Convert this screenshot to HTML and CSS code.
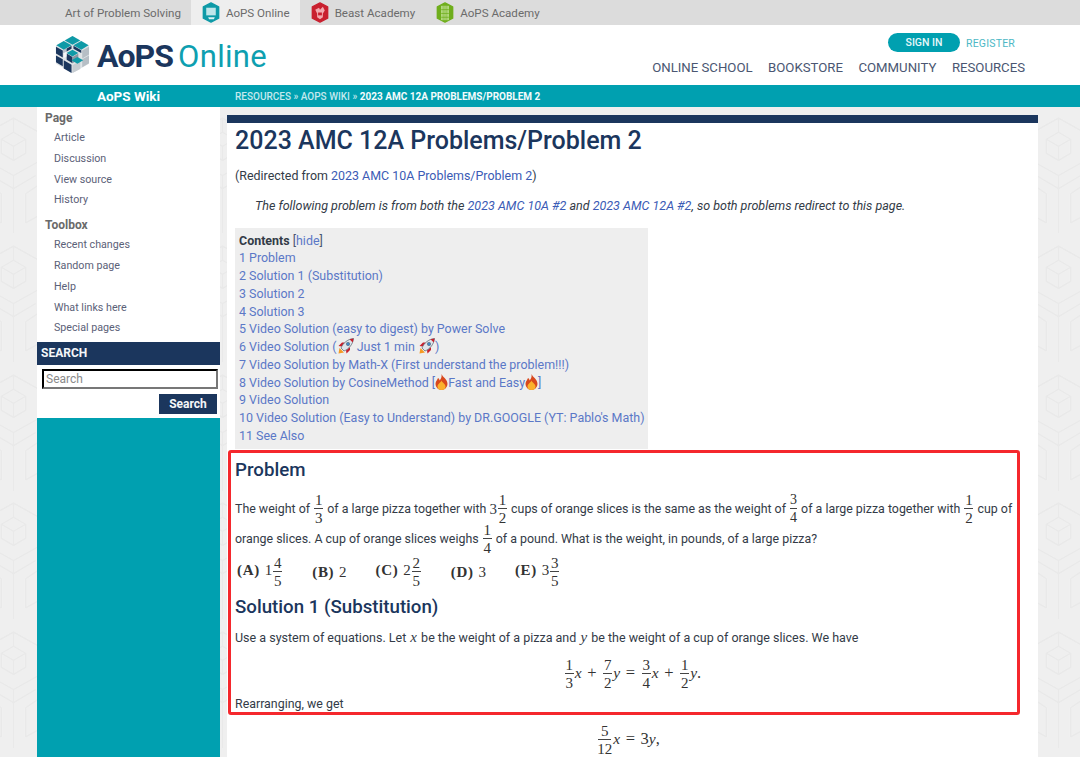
FILE: index.html
```html
<!DOCTYPE html>
<html lang="en">
<head>
<meta charset="utf-8">
<title>2023 AMC 12A Problems/Problem 2 - AoPS Wiki</title>
<link rel="stylesheet" href="styles.css">
</head>
<body>
<svg class="defs" width="0" height="0" aria-hidden="true">
  <defs>
    <symbol id="rocket" viewBox="0 0 16 16">
      <path d="M.500 15.500l1-5.500 4.500 4.500z" fill="#f59a23"/>
      <path d="M3.500 8.500L.500 8 4 4.500h3zM8 12.500l.5 3L12 12V9z" fill="#c8202c"/>
      <path d="M3 10C5 5 10 1 15.500.5 15 6 11 11 6 13z" fill="#dfe5ea" stroke="#4f5d6a" stroke-width=".7"/>
      <path d="M11.500 1.200L15.500.5 14.800 4.500z" fill="#c8202c"/>
      <circle cx="10" cy="6" r="1.700" fill="#3f88c5" stroke="#4f5d6a" stroke-width=".5"/>
    </symbol>
    <symbol id="flame" viewBox="0 0 13 16">
      <path d="M6.500 0c1 3 6 5 6 10a6 6 0 0 1-12 0c0-3 2-4 2.500-6 1 .5 1.500 1.500 1.500 2.500C6 5 7 3 6.500 0z" fill="#d9481c"/>
      <path d="M6.500 6.500c.5 2 4 3.200 4 6a4 3.500 0 0 1-8 0c0-2.800 3.500-4 4-6z" fill="#fbb02c"/>
    </symbol>
  </defs>
</svg>

<nav class="topbar">
  <a class="site">Art of Problem Solving</a>
  <a class="site active">
    <svg class="site-icon" viewBox="0 0 18 22"><path d="M9 1l8 4v12l-8 4-8-4V5z" fill="#0e9aa7" stroke="#0e9aa7" stroke-width="1.500" stroke-linejoin="round"/><path d="M4 6h10v8H4z" fill="#bfe6ea"/><path d="M6 16h7l-1 2H7z" fill="#dff3f5"/></svg>
    AoPS Online
  </a>
  <a class="site">
    <svg class="site-icon" viewBox="0 0 18 22"><path d="M9 1l8 4v12l-8 4-8-4V5z" fill="#c9202f" stroke="#c9202f" stroke-width="1.500" stroke-linejoin="round"/><path d="M4 8l4-2 1 2 3-3 2 4-2 3v4l-3 2-3-2v-4z" fill="#f2a9af"/><path d="M7 11h4v3H7z" fill="#c9202f"/></svg>
    Beast Academy
  </a>
  <a class="site">
    <svg class="site-icon" viewBox="0 0 18 22"><path d="M9 1l8 4v12l-8 4-8-4V5z" fill="#6fae1c" stroke="#6fae1c" stroke-width="1.500" stroke-linejoin="round"/><path d="M5 4h8v15H5z" fill="#c5e299"/><path d="M7 4v15M9 4v15M11 4v15M5 8h8M5 12h8M5 16h8" stroke="#6fae1c" stroke-width=".8"/></svg>
    AoPS Academy
  </a>
</nav>

<header class="masthead">
  <a class="logo">
    <svg class="logo-mark" viewBox="0 0 36 40">
      <path d="M18 1l17 9.500v19L18 39 1 29.500v-19z" fill="#dfe3e6"/>
      <path d="M18 1l8 4.500-8 4.500-8-4.500z" fill="#0e9aa7"/>
      <path d="M9 6l8 4.500-8 4.500-7.500-4.500zM27 6l7.500 4.500L27 15l-8-4.500z" fill="#0e9aa7"/>
      <path d="M1 12l7 4v7l-7-4zM1 21l7 4v7l-7-4zM9 26l8 4.500V39l-8-4.500z" fill="#1b365d"/>
      <path d="M18 31l8-4.500V35l-8 4z" fill="#c6ccd1"/>
      <path d="M28 16l7-4v8l-7 4zM28 25l7-4v8l-7 4z" fill="#b6bec5"/>
      <path d="M19 11l8 4.500v3L24 17l-5-3zM17 11l-8 4.500v3L12 17l5-3z" fill="#1b365d"/>
      <path d="M18 15l6 3.500-6 3.500-6-3.500z" fill="#0e9aa7"/>
      <path d="M12 19l6 3.500V29l-6-3.500z" fill="#1b365d"/>
      <path d="M18 22.500l6-3.500v6.500L18 29z" fill="#8a97a3"/>
      <path d="M17 26l6-3.500 6 3.500-6 3.500z" fill="#0e9aa7"/>
      <path d="M9 15.500l3-1.800v8L9 23.500z" fill="#fff" opacity=".7"/>
    </svg>
    <span class="logo-aops">AoPS</span><span class="logo-online">Online</span>
  </a>
  <div class="head-right">
    <div class="account">
      <a class="signin">SIGN IN</a>
      <a class="register">REGISTER</a>
    </div>
    <div class="mainnav">
      <a>ONLINE SCHOOL</a>
      <a>BOOKSTORE</a>
      <a>COMMUNITY</a>
      <a>RESOURCES</a>
    </div>
  </div>
</header>

<div class="subbar">
  <div class="wiki-title">AoPS Wiki</div>
  <div class="crumbs"><span>RESOURCES » AOPS WIKI » </span><b>2023 AMC 12A PROBLEMS/PROBLEM 2</b></div>
</div>

<div class="layout">
  <aside class="sidebar">
    <div class="menu">
      <h4>Page</h4>
      <a>Article</a>
      <a>Discussion</a>
      <a>View source</a>
      <a>History</a>
      <h4 class="second">Toolbox</h4>
      <a>Recent changes</a>
      <a>Random page</a>
      <a>Help</a>
      <a>What links here</a>
      <a>Special pages</a>
    </div>
    <div class="search-title">SEARCH</div>
    <div class="search">
      <input class="search-input" type="text" placeholder="Search">
      <button class="search-btn" type="button">Search</button>
    </div>
    <div class="side-fill"></div>
  </aside>

  <main class="content">
    <div class="band"></div>
    <div class="article">
      <h1>2023 AMC 12A Problems/Problem 2</h1>
      <p class="redirect">(Redirected from <a class="lnk">2023 AMC 10A Problems/Problem 2</a>)</p>
      <p class="note">The following problem is from both the <a class="lnk">2023 AMC 10A #2</a> and <a class="lnk">2023 AMC 12A #2</a>, so both problems redirect to this page.</p>
      <div class="toc">
        <div><b>Contents</b> [<a class="toc-link">hide</a>]</div>
        <a>1 Problem</a>
        <a>2 Solution 1 (Substitution)</a>
        <a>3 Solution 2</a>
        <a>4 Solution 3</a>
        <a>5 Video Solution (easy to digest) by Power Solve</a>
        <a>6 Video Solution (<svg class="emoji"><use href="#rocket"/></svg> Just 1 min <svg class="emoji"><use href="#rocket"/></svg>)</a>
        <a>7 Video Solution by Math-X (First understand the problem!!!)</a>
        <a>8 Video Solution by CosineMethod [<svg class="emoji flame"><use href="#flame"/></svg>Fast and Easy<svg class="emoji flame"><use href="#flame"/></svg>]</a>
        <a>9 Video Solution</a>
        <a>10 Video Solution (Easy to Understand) by DR.GOOGLE (YT: Pablo's Math)</a>
        <a>11 See Also</a>
      </div>

      <h2 class="h-problem">Problem</h2>
      <p class="text line1">The weight of <span class="frac"><i>1</i><i>3</i></span> of a large pizza together with <span class="m">3</span><span class="frac"><i>1</i><i>2</i></span> cups of orange slices is the same as the weight of <span class="frac small"><i>3</i><i>4</i></span> of a large pizza together with <span class="frac"><i>1</i><i>2</i></span> cup of</p>
      <p class="text line2">orange slices. A cup of orange slices weighs <span class="frac"><i>1</i><i>4</i></span> of a pound. What is the weight, in pounds, of a large pizza?</p>
      <div class="choices">
        <span class="choice"><b>(A)</b> 1<span class="frac"><i>4</i><i>5</i></span></span>
        <span class="choice"><b>(B)</b> 2</span>
        <span class="choice"><b>(C)</b> 2<span class="frac"><i>2</i><i>5</i></span></span>
        <span class="choice"><b>(D)</b> 3</span>
        <span class="choice"><b>(E)</b> 3<span class="frac"><i>3</i><i>5</i></span></span>
      </div>

      <h2 class="h-solution">Solution 1 (Substitution)</h2>
      <p class="text sol">Use a system of equations. Let <em class="mv">x</em> be the weight of a pizza and <em class="mv">y</em> be the weight of a cup of orange slices. We have</p>
      <div class="eq eq1"><span class="frac"><i>1</i><i>3</i></span><em class="mv">x</em> + <span class="frac"><i>7</i><i>2</i></span><em class="mv">y</em> = <span class="frac"><i>3</i><i>4</i></span><em class="mv">x</em> + <span class="frac"><i>1</i><i>2</i></span><em class="mv">y</em>.</div>
      <p class="text rearr">Rearranging, we get</p>
      <div class="eq eq2"><span class="frac wide"><i>5</i><i>12</i></span><em class="mv">x</em> = 3<em class="mv">y</em>,</div>
    </div>
  </main>
</div>
<div class="highlight"></div>
</body>
</html>
```
FILE: styles.css
```css
* { box-sizing: border-box; }
html, body { margin: 0; height: 757px; overflow: hidden; }
body {
  font-family: Roboto, "Liberation Sans", sans-serif;
  color: #333b47;
  background-color: #efefef;
  background-image: url("data:image/svg+xml,%3Csvg xmlns='http://www.w3.org/2000/svg' width='104' height='128' viewBox='0 0 104 128' preserveAspectRatio='none'%3E%3Cg fill='none' stroke='%23e9e9e9' stroke-width='1.300'%3E%3Cpath d='M52 27L64 34V48L52 55L40 48V34ZM40 34L52 41L64 34M52 41V55'/%3E%3Cpath d='M52 13V27M0 42L52 13L104 42'/%3E%3Cpath d='M0 41L52 70L104 41M52 70V128M52 83L30 70M52 83L74 70'/%3E%3Cpath d='M40 88V117M64 88V117M40 88L28 80M64 88L76 80M40 117L0 95M64 117L104 95'/%3E%3C/g%3E%3C/svg%3E");
  background-size: 104.5px 128.5px;
  background-position: -39px 105px;
  position: relative;
}
a { color: inherit; text-decoration: none; }
.defs { position: absolute; }

.topbar {
  height: 25px;
  background: #dcdcdc;
  display: flex;
  padding-left: 54px;
  font-size: 11.600px;
  color: #6b6b6b;
}
.site {
  display: flex;
  align-items: center;
  gap: 6px;
  padding: 0 10px 0 11px;
}
.site.active { background: #eeeeee; }
.site-icon { width: 18px; height: 21px; }

.masthead {
  height: 60px;
  background: #fff;
  display: flex;
  justify-content: space-between;
  padding: 0 55px 0 55px;
}
.logo { display: flex; align-items: center; padding-bottom: 1px; }
.logo-mark { width: 35px; height: 39px; margin-right: 7px; }
.logo-aops { font: 700 32px/1 Roboto, sans-serif; color: #1b365d; letter-spacing: -.9px; margin-top: 3px; }
.logo-online { font: 400 31px/1 Roboto, sans-serif; color: #0e9fb0; margin: 3px 0 0 5px; letter-spacing: .3px; }
.head-right { display: flex; flex-direction: column; align-items: flex-end; }
.account { display: flex; align-items: center; height: 19px; margin-top: 8px; margin-right: 10px; }
.signin {
  width: 72px; height: 19px; border-radius: 10px;
  background: #00a0b0; color: #e8f8fa;
  font-size: 10.500px; font-weight: 500; text-align: center; line-height: 20px;
}
.register { font-size: 10.500px; color: #4db8c5; margin: 1px 0 0 6px; letter-spacing: .2px; }
.mainnav { display: flex; gap: 15.500px; margin-top: 6.500px; font-size: 13.200px; line-height: 18px; color: #4a5672; }

.subbar { height: 22px; background: #00a0b0; display: flex; align-items: center; color: #fff; }
.wiki-title { width: 235px; padding-left: 97px; font-size: 13.500px; font-weight: 700; }
.crumbs { font-size: 10px; font-weight: 500; color: #c4e9ee; }
.crumbs b { color: #f2fbfc; font-weight: 700; }

.layout { display: flex; align-items: stretch; height: 650px; padding-left: 37px; }
.sidebar { width: 183px; margin-right: 7px; display: flex; flex-direction: column; background: #fff; }
.menu { padding: 3.500px 0 0 8px; height: 235px; }
.menu h4 { margin: 0; font-size: 12px; line-height: 15px; font-weight: 700; color: #6a6a6a; padding-bottom: 2.500px; }
.menu h4.second { margin-top: 7px; padding-bottom: 2px; }
.menu a { display: block; margin-left: 9px; font-size: 10.700px; line-height: 20.800px; color: #5b6178; }
.search-title {
  height: 23px; background: #1b365d; color: #f4f6f9;
  font-size: 12px; font-weight: 700; line-height: 23px; padding-left: 4px;
}
.search { height: 53px; padding: 4px 2px 0 5px; display: flex; flex-direction: column; align-items: flex-end; gap: 5px; }
.search-input {
  width: 176px; height: 20px; padding: 0 2px; border: 2px inset #555; border-color: #444 #777 #777 #444;
  font: 12px Roboto, sans-serif; background: #fff;
}
.search-input::placeholder { color: #8a8a8a; }
.search-btn {
  width: 58px; height: 20px; padding: 0; border: 0; background: #1b365d; color: #f4f6f9;
  font: 700 12px Roboto, sans-serif; margin-right: 1px;
}
.side-fill { flex: 1; background: #00a0b0; }

.content { width: 811px; background: #fff; margin-top: 8px; height: 642px; overflow: hidden; }
.band { height: 8px; background: #1b365d; }
.article { padding: 0 8px; }
h1 { margin: 0; padding-top: 2px; font-size: 25px; line-height: 32px; font-weight: 500; color: #1b365d; }
.redirect { margin: 10px 0 0; font-size: 12.450px; line-height: 18px; }
.note { margin: 12px 0 0; padding-left: 20px; font-size: 12.520px; line-height: 18px; font-style: italic; }
.lnk { color: #3b5bb5; font-style: inherit; }

.toc {
  width: 413px; height: 221px; margin: 13px 0 0; padding: 3.500px 4px 0;
  background: #eeeeee; font-size: 12.450px; line-height: 17.750px; color: #4a5570;
}
.toc b { font-weight: 700; color: #333b47; }
.toc > a, .toc-link { color: #5b78c7; }
.toc > a { display: block; white-space: nowrap; }
.emoji { display: inline-block; width: 16px; height: 16px; vertical-align: -3px; margin: 0 0 0 1px; }
.emoji.flame { width: 13px; margin: 0; }

h2 { margin: 0; font-weight: 500; font-size: 18.700px; line-height: 24px; color: #1b365d; }
.h-problem { margin-top: 9px; }
.text { margin: 0; font-size: 12.400px; color: #333b47; white-space: nowrap; }
.line1 { height: 30px; line-height: 30px; margin-top: 12px; display: flex; align-items: center; white-space: pre; }
.line2 { height: 30px; line-height: 30px; margin-top: 0; display: flex; align-items: center; white-space: pre; }
.m { font-family: "Liberation Serif", serif; font-size: 15px; }
.frac {
  display: inline-flex; flex-direction: column; align-items: center;
  vertical-align: middle; font-family: "Liberation Serif", serif; margin: 0 1px;
  font-size: 15px; color: #333;
}
.frac i { font-style: normal; display: block; min-width: 9px; text-align: center; line-height: 12px; }
.frac i:first-child { border-bottom: 1px solid #444; padding-bottom: 2px; margin-bottom: 3px; }
.frac.small { font-size: 14px; }
.frac.small i { min-width: 7px; }
.choices {
  display: flex; height: 30px; align-items: center; gap: 29px; margin-top: 3px; padding-left: 2px;
  font-family: "Liberation Serif", serif; font-size: 15px; color: #333;
}
.choice { white-space: nowrap; }
.choice b { letter-spacing: .7px; margin-right: 1px; }
.h-solution { margin-top: 8px; }
.sol { font-size: 12.500px; line-height: 18px; margin-top: 9px; }
.mv { font-family: "Liberation Serif", serif; font-style: italic; font-size: 15px; margin: 0 1px; }
.eq {
  font-family: "Liberation Serif", serif; font-size: 16.500px; color: #333; text-align: center; white-space: nowrap; word-spacing: 1.500px;
}
.eq .mv { font-size: 15.500px; margin: 0; }
.eq1 { margin-top: 8px; height: 36px; line-height: 36px; }
.rearr { margin-top: 4px; line-height: 18px; }
.eq2 { margin-top: 8px; line-height: 36px; padding-right: 9px; }
.frac.wide i:first-child { padding: 0 3px 2px; }

.highlight {
  position: absolute; left: 228px; top: 450px; width: 792px; height: 265px;
  border: 3px solid #f5282d; border-radius: 3px; pointer-events: none;
}
```
